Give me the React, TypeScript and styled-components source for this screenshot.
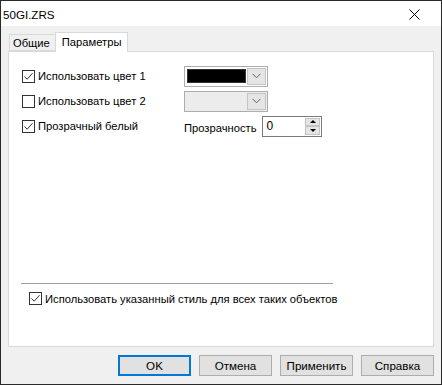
import React from 'react'
import styled, { createGlobalStyle } from 'styled-components'

const GlobalStyle = createGlobalStyle`
  html, body { margin: 0; padding: 0; background: #ffffff; }
  body { font-family: "Liberation Sans", Arial, sans-serif; font-size: 11.2px; color: #000; }
  * { box-sizing: border-box; }
`

class CheckBox extends React.Component<{checked:boolean,label:string}>{
  render(){
    return(
      <CheckRow>
        <Box>
          {this.props.checked &&
            <svg width="11" height="11" viewBox="0 0 11 11">
              <path d="M1.5 5.5 L4.2 8.2 L9.5 2.2" fill="none" stroke="#333" strokeWidth="1"/>
            </svg>}
        </Box>
        <span>{this.props.label}</span>
      </CheckRow>
    )
  }
}

const Chevron = () => (
  <svg width="9" height="6" viewBox="0 0 9 6">
    <path d="M0.5 0.8 L4.5 4.8 L8.5 0.8" fill="none" stroke="#606060" strokeWidth="1"/>
  </svg>
)

export default class App extends React.Component{
  render(){
    return(
      <>
        <GlobalStyle/>
        <Window>
          <TitleBar>
            <Title>50GI.ZRS</Title>
            <CloseIcon width="11" height="11" viewBox="0 0 11 11">
              <path d="M0.5 0.5 L10.5 10.5 M10.5 0.5 L0.5 10.5" stroke="#000" strokeWidth="1"/>
            </CloseIcon>
          </TitleBar>
          <Body>
            <TabStrip>
              <Tab active={false}>Общие</Tab>
              <Tab active={true}>Параметры</Tab>
            </TabStrip>
            <Panel>
              <Rows>
                <Row>
                  <CheckBox checked={true} label="Использовать цвет 1"/>
                  <Combo disabled={false}>
                    <Swatch/>
                    <DropButton><Chevron/></DropButton>
                  </Combo>
                </Row>
                <Row>
                  <CheckBox checked={false} label="Использовать цвет 2"/>
                  <Combo disabled={true}>
                    <Blank/>
                    <DropButton><Chevron/></DropButton>
                  </Combo>
                </Row>
                <Row>
                  <CheckBox checked={true} label="Прозрачный белый"/>
                  <SpinGroup>
                    <SpinLabel>Прозрачность</SpinLabel>
                    <Spin>
                      <SpinValue>0</SpinValue>
                      <SpinButtons>
                        <SpinBtn><Arrow up={true}/></SpinBtn>
                        <SpinBtn><Arrow up={false}/></SpinBtn>
                      </SpinButtons>
                    </Spin>
                  </SpinGroup>
                </Row>
              </Rows>
              <Separator/>
              <BottomCheck>
                <CheckBox checked={true} label="Использовать указанный стиль для всех таких объектов"/>
              </BottomCheck>
            </Panel>
            <Footer>
              <Button primary={true}>OK</Button>
              <Button primary={false}>Отмена</Button>
              <Button primary={false}>Применить</Button>
              <Button primary={false}>Справка</Button>
            </Footer>
          </Body>
        </Window>
      </>
    )
  }
}

const Window = styled.div`
  width: 442px;
  height: 385px;
  border: 1px solid #2a2a2a;
  background: #f0f0f0;
  display: flex;
  flex-direction: column;
`
const TitleBar = styled.div`
  height: 25px;
  background: #ffffff;
  display: flex;
  align-items: center;
  justify-content: space-between;
  padding: 0 21px 0 2px;
`
const Title = styled.div`
  font-size: 11.6px;
  padding-top: 1px;
`
const CloseIcon = styled.svg`
  display: block;
  margin-top: 1px;
`
const Body = styled.div`
  flex: 1;
  display: flex;
  flex-direction: column;
  padding: 7px 7px 0 6px;
`
const TabStrip = styled.div`
  display: flex;
  align-items: flex-end;
  height: 18px;
  padding-left: 2px;
  position: relative;
  z-index: 1;
`
const Tab = styled.div<{active:boolean}>`
  height: ${(p)=>p.active?'20px':'17px'};
  margin-bottom: ${(p)=>p.active?'-1px':'0'};
  padding: ${(p)=>p.active?'3px 6px 0 6px':'2px 5px 0 3px'};
  background: ${(p)=>p.active?'#ffffff':'#f0f0f0'};
  border: 1px solid #d9d9d9;
  border-bottom: ${(p)=>p.active?'none':'1px solid #d9d9d9'};
  border-right: ${(p)=>p.active?'1px solid #d9d9d9':'none'};
  white-space: nowrap;
`
const Panel = styled.div`
  height: 296px;
  margin-left: 1px;
  background: #ffffff;
  border: 1px solid #d9d9d9;
  display: flex;
  flex-direction: column;
  padding: 13px 12px 0 13px;
`
const Rows = styled.div`
  display: flex;
  flex-direction: column;
  gap: 3px;
  flex: 1;
`
const Row = styled.div`
  display: grid;
  grid-template-columns: 162px 1fr;
  align-items: center;
  height: 22px;
`
const CheckRow = styled.label`
  display: flex;
  align-items: center;
  gap: 3px;
  white-space: nowrap;
`
const Box = styled.div`
  width: 13px;
  height: 13px;
  border: 1px solid #333333;
  background: #ffffff;
  display: flex;
  align-items: center;
  justify-content: center;
`
const Combo = styled.div<{disabled:boolean}>`
  width: 84px;
  height: 21px;
  border: 1px solid #adadad;
  background: ${(p)=>p.disabled?'#ececec':'#ffffff'};
  display: flex;
  align-items: stretch;
  padding: 2px 1px 1px 2px;
  gap: 1px;
`
const Swatch = styled.div`
  flex: 1;
  margin-bottom: 2px;
  background: #000000;
  border: 1px solid #333;
`
const Blank = styled.div`
  flex: 1;
`
const DropButton = styled.div`
  width: 19px;
  margin-top: -1px;
  background: #e5e5e5;
  border: 1px solid #c4c4c4;
  display: flex;
  align-items: center;
  justify-content: center;
`
const SpinGroup = styled.div`
  display: flex;
  align-items: center;
  gap: 6px;
`
const SpinLabel = styled.span`
  padding-top: 3px;
`
const Spin = styled.div`
  width: 60px;
  height: 21px;
  border: 1px solid #7a7a7a;
  background: #ffffff;
  display: flex;
  align-items: stretch;
  padding: 0 1px 0 3px;
`
const SpinValue = styled.div`
  flex: 1;
  display: flex;
  align-items: center;
  font-size: 12px;
`
const SpinButtons = styled.div`
  width: 15px;
  display: flex;
  flex-direction: column;
  padding: 1px 0;
`
const SpinBtn = styled.div`
  flex: 1;
  background: #e5e5e5;
  border: 1px solid #c4c4c4;
  display: flex;
  align-items: center;
  justify-content: center;
`
const Arrow = styled.div<{up:boolean}>`
  width: 0;
  height: 0;
  border-left: 3.5px solid transparent;
  border-right: 3.5px solid transparent;
  border-bottom: ${(p)=>p.up?'3px solid #000':'none'};
  border-top: ${(p)=>p.up?'none':'3px solid #000'};
`
const Separator = styled.div`
  width: 312px;
  height: 1px;
  margin-left: -1px;
  background: #a0a0a0;
`
const BottomCheck = styled.div`
  padding: 8px 0 41px 7px;
`
const Footer = styled.div`
  display: flex;
  justify-content: flex-end;
  gap: 8px;
  padding-top: 8px;
`
const Button = styled.div<{primary:boolean}>`
  width: 73px;
  height: 21px;
  background: #e1e1e1;
  border: ${(p)=>p.primary?'2px solid #0078d7':'1px solid #adadad'};
  display: flex;
  align-items: center;
  justify-content: center;
  font-size: 11.6px;
`
